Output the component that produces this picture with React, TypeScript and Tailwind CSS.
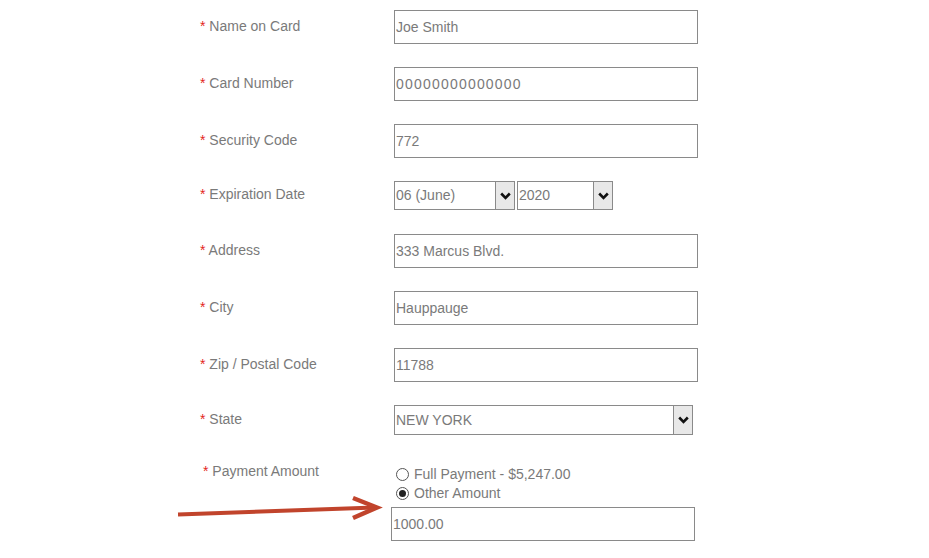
import React from "react";

const Label = ({ text, className = "w-[194px] pb-[2px]" }: { text: string; className?: string }) => (
  <div className={`shrink-0 text-[14px] text-[#7a7a7a] ${className}`}>
    <span className="text-[#e3261c]">*</span> {text}
  </div>
);

const TextBox = ({ value, className = "" }: { value: string; className?: string }) => (
  <input
    readOnly
    defaultValue={value}
    className={`h-[34px] w-[304px] border border-[#8a8a8a] bg-white pl-[1px] text-[14px] text-[#7a7a7a] outline-none ${className}`}
  />
);

const Chevron = () => (
  <svg width="11" height="8" viewBox="0 0 11 8">
    <path d="M1.2 1.5 L5.5 5.8 L9.8 1.5" fill="none" stroke="#111" strokeWidth="2.6" />
  </svg>
);

const Dropdown = ({ value, width, height }: { value: string; width: string; height: string }) => (
  <div className={`flex ${width} ${height} border border-[#8a8a8a] bg-white`}>
    <div className="flex flex-1 items-center pl-[1px] text-[14px] text-[#7a7a7a]">{value}</div>
    <div className="flex w-[19px] items-center justify-center border-l border-[#8a8a8a] bg-[#e8e8e8]">
      <Chevron />
    </div>
  </div>
);

const Row = ({ label, children, h = "h-[34px]", mb = "mb-[23px]" }: { label: string; children: React.ReactNode; h?: string; mb?: string }) => (
  <div className={`flex items-center ${h} ${mb}`}>
    <Label text={label} />
    {children}
  </div>
);

const Radio = ({ checked, text }: { checked?: boolean; text: string }) => (
  <div className="flex h-[19px] items-center pl-[5px] text-[14px] text-[#7a7a7a]">
    <span className="flex h-[13px] w-[13px] items-center justify-center rounded-full border border-[#555] bg-white">
      {checked && <span className="h-[7px] w-[7px] rounded-full bg-[#222]" />}
    </span>
    <span className="ml-[5px]">{text}</span>
  </div>
);

export default function App() {
  return (
    <div
      className="relative h-[558px] w-[929px] overflow-hidden bg-white"
      style={{ fontFamily: '"Liberation Sans", Arial, sans-serif' }}
    >
      <div className="pl-[200px] pt-[10px]">
        <Row label="Name on Card">
          <TextBox value="Joe Smith" />
        </Row>
        <Row label="Card Number">
          <TextBox value="00000000000000" className="tracking-[1.2px]" />
        </Row>
        <Row label="Security Code">
          <TextBox value="772" />
        </Row>
        <Row label="Expiration Date" h="h-[29px]" mb="mb-[24px]">
          <div className="flex gap-[2px]">
            <Dropdown value="06 (June)" width="w-[121px]" height="h-[29px]" />
            <Dropdown value="2020" width="w-[96px]" height="h-[29px]" />
          </div>
        </Row>
        <Row label="Address">
          <TextBox value="333 Marcus Blvd." />
        </Row>
        <Row label="City">
          <TextBox value="Hauppauge" />
        </Row>
        <Row label="Zip / Postal Code">
          <TextBox value="11788" />
        </Row>
        <Row label="State" h="h-[30px]" mb="mb-[26px]">
          <Dropdown value="NEW YORK" width="w-[299px]" height="h-[30px]" />
        </Row>
        <div className="flex">
          <Label text="Payment Amount" className="w-[191px] pl-[3px]" />
          <div className="flex flex-col pt-[4px]">
            <Radio text="Full Payment - $5,247.00" />
            <Radio checked text="Other Amount" />
            <TextBox value="1000.00" className="mt-[4px]" />
          </div>
        </div>
      </div>

      <svg className="absolute left-0 top-0" width="929" height="558" viewBox="0 0 929 558">
        <line x1="178" y1="514.5" x2="375" y2="507.5" stroke="#c1442c" strokeWidth="4" />
        <polyline
          points="353,498 377,507.5 353,518"
          fill="none"
          stroke="#c1442c"
          strokeWidth="4.5"
          strokeLinejoin="miter"
        />
      </svg>
    </div>
  );
}
